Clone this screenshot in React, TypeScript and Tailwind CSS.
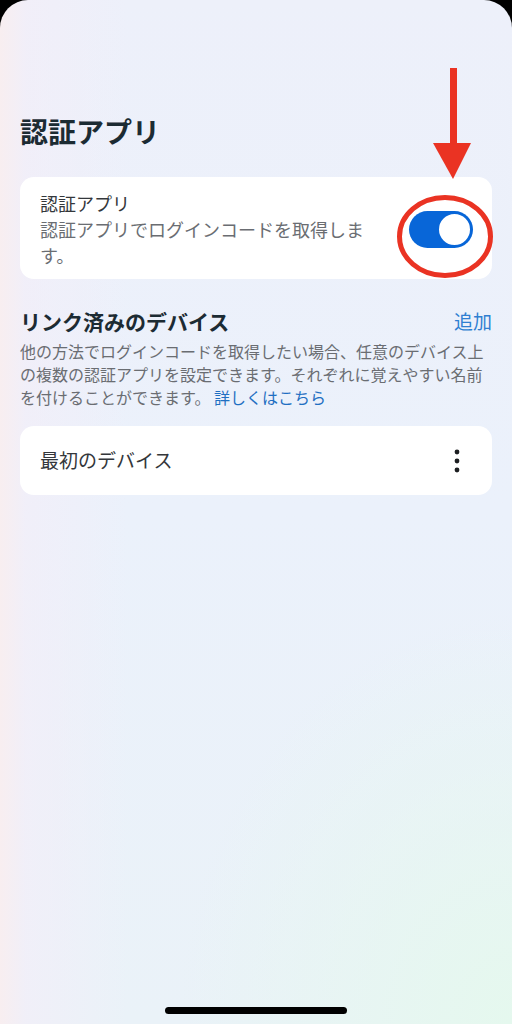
import React from "react";

const FONT = { fontFamily: '"Noto Sans CJK JP", "Noto Sans", sans-serif' };

const Toggle: React.FC<{ on: boolean }> = ({ on }) => (
    <div
        className={`flex h-[37px] w-[64px] shrink-0 items-center rounded-full p-[1px] ${
            on ? "justify-end bg-[#0866d8]" : "justify-start bg-gray-300"
        }`}
    >
        <div className="h-[35px] w-[35px] rounded-full border-2 border-[#0866d8] bg-white" />
    </div>
);

const MoreDots: React.FC = () => (
    <svg width="24" height="24" viewBox="0 0 24 24" className="shrink-0">
        <circle cx="12" cy="3" r="2.4" fill="#1c1e21" />
        <circle cx="12" cy="12" r="2.4" fill="#1c1e21" />
        <circle cx="12" cy="21" r="2.4" fill="#1c1e21" />
    </svg>
);

export default function App() {
    return (
        <div className="h-[1024px] w-[512px] bg-black" style={FONT}>
            <div className="relative flex h-full flex-col overflow-hidden rounded-t-[28px] bg-[radial-gradient(ellipse_65%_40%_at_100%_100%,#e5f8ee_0%,rgba(229,248,238,0)_100%),linear-gradient(to_right,#f8eef0_0%,rgba(243,238,248,0.7)_5%,rgba(236,240,250,0)_25%),linear-gradient(to_bottom,#edf0fa_0%,#ebf1fb_50%,#eaf2f8_100%)] px-5 pt-[111px]">
                {/* Page title */}
                <h1 className="text-[28px] font-bold leading-10 text-[#1c2b33]">
                    認証アプリ
                </h1>

                {/* Authenticator toggle card */}
                <div className="mt-[26px] flex items-center justify-between rounded-[14px] bg-white pb-[11px] pl-5 pr-[19px] pt-[13px]">
                    <div className="w-[330px]">
                        <div className="text-[18px] leading-[26px] text-[#34373b]">
                            認証アプリ
                        </div>
                        <div className="text-[18px] leading-[26px] text-[#6a6d72]">
                            認証アプリでログインコードを取得します。
                        </div>
                    </div>
                    <Toggle on />
                </div>

                {/* Linked devices */}
                <div className="mt-[27px] flex items-center justify-between">
                    <h2 className="text-[21px] font-bold leading-[30px] text-[#1c2b33]">
                        リンク済みのデバイス
                    </h2>
                    <span className="text-[19px] leading-[30px] text-[#2f7fd1]">追加</span>
                </div>
                <p className="mt-1 text-[16px] leading-[23px] text-[#6a6d72]">
                    他の方法でログインコードを取得したい場合、任意のデバイス上
                    <br />
                    の複数の認証アプリを設定できます。それぞれに覚えやすい名前
                    <br />
                    を付けることができます。 <span className="text-[#1f6fc2]">詳しくはこちら</span>
                </p>

                <div className="mt-[17px] flex h-[69px] items-center justify-between rounded-[14px] bg-white pl-5 pr-[23px]">
                    <span className="text-[19px] text-[#34373b]">最初のデバイス</span>
                    <MoreDots />
                </div>

                {/* Home indicator */}
                <div className="mb-[10px] mt-auto flex justify-center">
                    <div className="h-[7px] w-[182px] rounded-full bg-black" />
                </div>

                {/* Red annotation: arrow and circle around the toggle */}
                <svg
                    className="pointer-events-none absolute inset-0"
                    width="512"
                    height="1024"
                    viewBox="0 0 512 1024"
                >
                    <rect x="450" y="68" width="7" height="78" fill="#ea3323" />
                    <polygon points="433,143 471,143 453,179" fill="#ea3323" />
                    <ellipse
                        cx="445"
                        cy="236.5"
                        rx="45.5"
                        ry="39"
                        fill="none"
                        stroke="#ea3323"
                        strokeWidth="5"
                    />
                </svg>
            </div>
        </div>
    );
}
